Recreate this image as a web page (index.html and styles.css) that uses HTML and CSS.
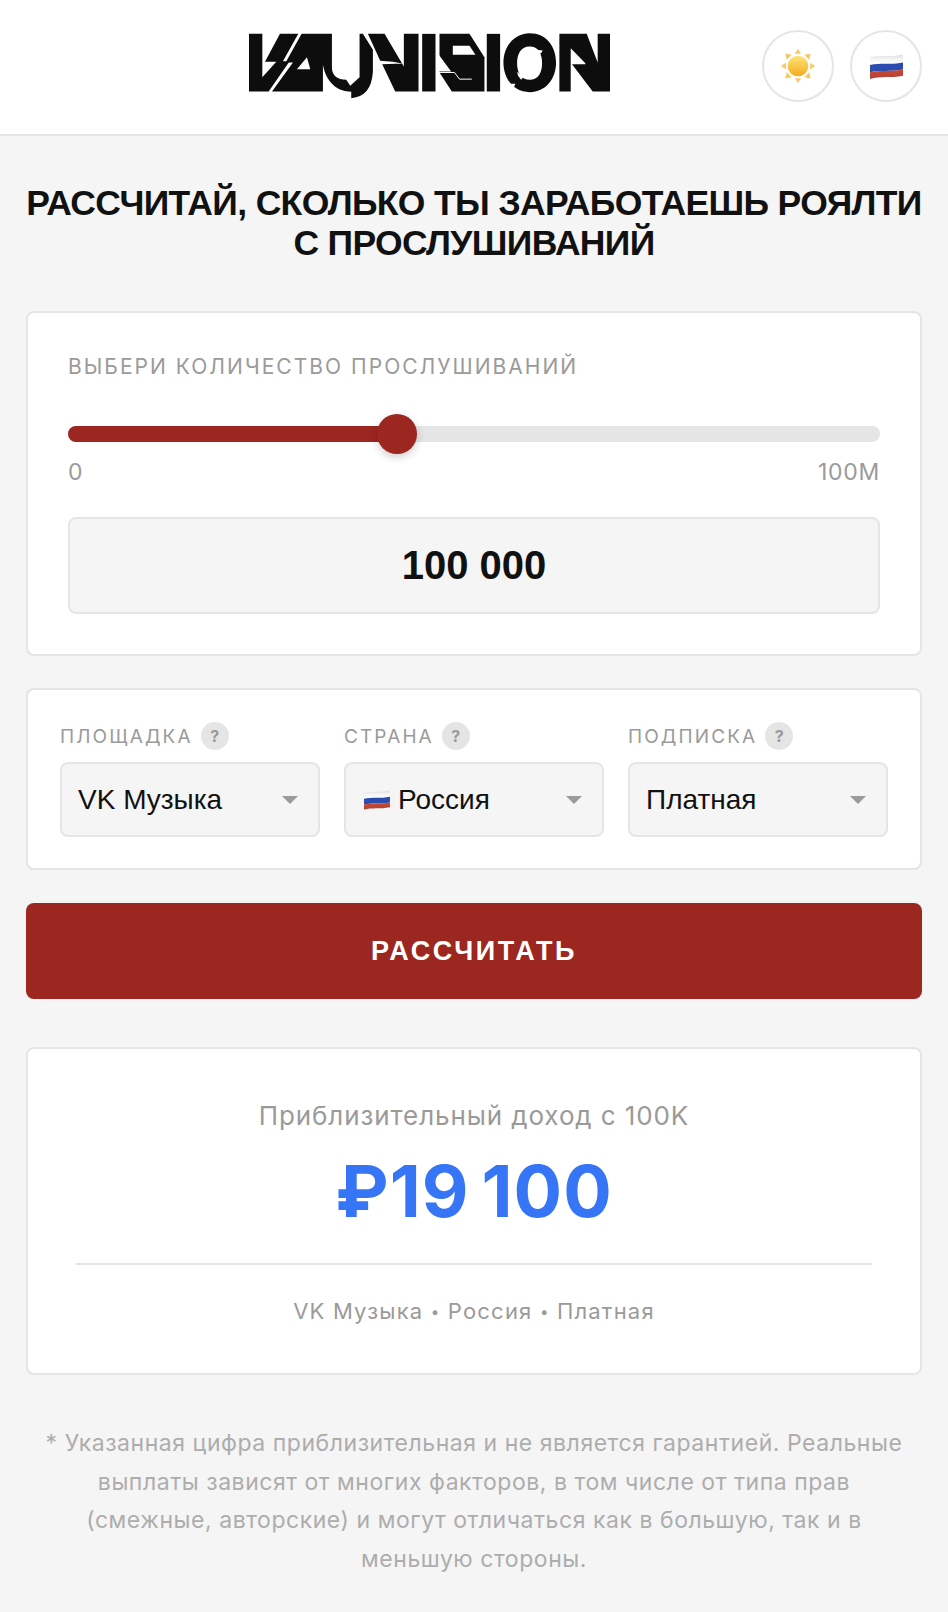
FILE: index.html
```html
<!doctype html>
<html lang="ru">
<head>
  <meta charset="utf-8">
  <title>Калькулятор роялти</title>
  <meta name="viewport" content="width=device-width,initial-scale=1">
  <link rel="stylesheet" href="styles.css">
</head>
<body>
  <header class="topbar">
    <svg class="logo" viewBox="85 100 1090 197" aria-label="VAUVISION">
      <!-- V -->
      <polygon points="88,102 128,102 128,232 170,186 136,186 181,102 236,102 190,184 210,184 147,275 88,275"/>
      <!-- A + U -->
      <path d="M246,102 H337 V205 Q339,238 380,240 L392,258 L420,232 V102 H430 L460,150 V215 Q456,290 395,295 V276 C355,276 320,250 310,195 V275 H157 L220,188 H198 Z"/>
      <polygon class="cut" points="262,172 272,208 232,208"/>
      <!-- N -->
      <polygon points="445,102 495,102 553,200 553,102 597,102 597,275 527,275 488,193 548,191 520,186 482,183"/>
      <!-- I -->
      <rect x="608" y="102" width="40" height="173"/>
      <!-- S -->
      <polygon points="660,102 750,102 795,172 795,275 697,275 660,218 660,102"/>
      <polygon class="cut" points="700,138 750,138 768,165 700,165"/>
      <polygon class="cut" points="658,165 695,215 658,215"/>
      <polyline class="cut-line" points="658,218 705,218 720,238 757,238"/>
      <!-- I -->
      <rect x="802" y="102" width="40" height="173"/>
      <!-- O -->
      <path fill-rule="evenodd" d="M931,100 C981,100 1010,140 1010,188 C1010,238 978,277 931,277 C884,277 852,238 852,188 C852,140 884,100 931,100 Z M931,140 C905,140 893,162 893,190 C893,218 905,240 931,240 C957,240 968,218 968,190 C968,162 957,140 931,140 Z"/>
      <polygon class="cut" points="975,100 1004,100 992,128"/>
      <polygon class="cut" points="952,150 970,152 965,160 955,160"/>
      <polygon class="cut" points="866,252 888,252 880,270 870,266"/>
      <polygon class="cut" points="893,215 912,232 905,240 896,228"/>
      <!-- N -->
      <path d="M1020,102 H1102 L1135,188 V102 H1172 V275 H1120 L1058,193 H1098 V190 L1054,145 V275 H1020 Z"/>
    </svg>
    <div class="top-actions">
      <button class="round-btn" aria-label="Тема">
        <svg class="sun" viewBox="0 0 40 40">
          <defs>
            <linearGradient id="sunFill" x1="0" y1="0" x2="0" y2="1">
              <stop offset="0" stop-color="#fde57a"/>
              <stop offset="1" stop-color="#f6aa1c"/>
            </linearGradient>
          </defs>
          <g fill="#f7c863">
            <polygon points="20,1 23.500,6.500 16.500,6.500"/>
            <polygon points="20,39 23.500,33.500 16.500,33.500"/>
            <polygon points="1,20 6.500,16.500 6.500,23.500"/>
            <polygon points="39,20 33.500,16.500 33.500,23.500"/>
            <polygon points="6,6 13,7.500 7.500,13"/>
            <polygon points="34,6 27,7.500 32.500,13"/>
            <polygon points="6,34 13,32.500 7.500,27"/>
            <polygon points="34,34 27,32.500 32.500,27"/>
          </g>
          <circle cx="20" cy="20" r="11.500" fill="url(#sunFill)"/>
        </svg>
      </button>
      <button class="round-btn" aria-label="Язык">
        <svg class="flag flag-lg" viewBox="0 0 32 24"><use href="#ruFlag"/></svg>
      </button>
    </div>
  </header>

  <svg class="defs">
    <defs>
      <linearGradient id="flagWhite" x1="0" y1="0" x2="0" y2="1">
        <stop offset="0" stop-color="#dcdcdc"/>
        <stop offset=".5" stop-color="#f6f6f6"/>
        <stop offset="1" stop-color="#ffffff"/>
      </linearGradient>
      <linearGradient id="flagRed" x1="0" y1="0" x2="0" y2="1">
        <stop offset="0" stop-color="#d2452f"/>
        <stop offset="1" stop-color="#a8453a"/>
      </linearGradient>
      <symbol id="ruFlag" viewBox="0 0 32 24">
        <path fill="url(#flagWhite)" d="M0,3 C10,.5 20,3.500 32,0 V8 C20,10.500 10,8 0,10.500 Z"/>
        <path fill="#2a4cb0" d="M0,10.500 C10,8 20,10.500 32,8 V15 C20,17.500 10,15 0,17.500 Z"/>
        <path fill="url(#flagRed)" d="M0,17.500 C10,15 20,17.500 32,15 V21 C20,23.500 10,21 0,24 Z"/>
      </symbol>
    </defs>
  </svg>

  <main class="page">
    <h1 class="page-title">Рассчитай, сколько ты заработаешь роялти<br>с прослушиваний</h1>

    <section class="card streams-card">
      <div class="field-label">Выбери количество прослушиваний</div>
      <div class="slider">
        <div class="slider-fill" style="width:40.5%"></div>
        <div class="slider-thumb" style="left:40.5%"></div>
      </div>
      <div class="slider-scale"><span>0</span><span>100M</span></div>
      <div class="streams-value">100 000</div>
    </section>

    <section class="card options-card">
      <div class="option">
        <div class="option-label">Площадка <span class="hint">?</span></div>
        <div class="select"><span class="select-value">VK Музыка</span></div>
      </div>
      <div class="option">
        <div class="option-label">Страна <span class="hint">?</span></div>
        <div class="select">
          <span class="select-value"><svg class="flag" viewBox="0 0 32 24"><use href="#ruFlag"/></svg>Россия</span>
        </div>
      </div>
      <div class="option">
        <div class="option-label">Подписка <span class="hint">?</span></div>
        <div class="select"><span class="select-value">Платная</span></div>
      </div>
    </section>

    <button class="calc-btn">Рассчитать</button>

    <section class="card result-card">
      <div class="result-title">Приблизительный доход с 100K</div>
      <div class="result-sum">₽19 100</div>
      <div class="result-meta">VK Музыка <span class="dot">•</span> Россия <span class="dot">•</span> Платная</div>
    </section>

    <p class="disclaimer">* Указанная цифра приблизительная и не является гарантией. Реальные выплаты зависят от многих факторов, в том числе от типа прав (смежные, авторские) и могут отличаться как в большую, так и в меньшую стороны.</p>
  </main>
</body>
</html>
```

FILE: styles.css
```css
:root {
  --bg: #f5f5f5;
  --card: #ffffff;
  --line: #e5e5e5;
  --text: #111111;
  --muted: #9a9a9a;
  --red: #9c2620;
  --blue: #3676f6;
}

* {
  box-sizing: border-box;
  margin: 0;
}
body {
  font-family: Inter, "Noto Sans", sans-serif;
  background: var(--bg);
  color: var(--text);
}

/* top bar */
.topbar {
  height: 136px;
  background: var(--card);
  border-bottom: 2px solid var(--line);
  display: flex;
  align-items: flex-start;
  padding: 30px 26px 0 248px;
}
.logo {
  width: 363px;
  height: 66px;
  margin-top: 3px;
  fill: #0d0d0d;
}
.logo .cut { fill: #fff; }
.logo .cut-line { fill: none; stroke: #fff; stroke-width: 3; }
.top-actions {
  margin-left: auto;
  display: flex;
  gap: 16px;
}
.round-btn {
  width: 72px;
  height: 72px;
  border-radius: 50%;
  border: 2px solid var(--line);
  background: var(--card);
  padding: 0;
  display: flex;
  align-items: center;
  justify-content: center;
}
.sun { width: 36px; height: 36px; }
.defs {
  position: absolute;
  width: 0;
  height: 0;
}
.flag {
  width: 26px;
  height: 20px;
  margin-left: 2px;
  margin-right: 8px;
}
.flag-lg { width: 33px; height: 25px; margin: 0; }

/* page */
.page { padding: 47px 26px 0; }
.page-title {
  font-family: "Liberation Sans", Arial, sans-serif;
  font-size: 35.5px;
  line-height: 40px;
  font-weight: 700;
  letter-spacing: -.65px;
  text-align: center;
  text-transform: uppercase;
}
.card {
  background: var(--card);
  border: 2px solid var(--line);
  border-radius: 8px;
}

/* streams */
.streams-card {
  margin-top: 48px;
  padding: 40px;
}
.field-label {
  font-size: 21px;
  line-height: 28px;
  letter-spacing: 2.03px;
  color: var(--muted);
  text-transform: uppercase;
}
.slider {
  position: relative;
  height: 16px;
  margin-top: 45px;
  border-radius: 8px;
  background: var(--line);
}
.slider-fill {
  height: 100%;
  border-radius: 8px;
  background: var(--red);
}
.slider-thumb {
  position: absolute;
  top: -12px;
  width: 40px;
  height: 40px;
  margin-left: -20px;
  border-radius: 50%;
  background: var(--red);
  box-shadow: 0 3px 8px rgba(0, 0, 0, .2);
}
.slider-scale {
  display: flex;
  justify-content: space-between;
  margin-top: 16px;
  font-size: 23px;
  line-height: 28px;
  letter-spacing: .7px;
  color: var(--muted);
}
.streams-value {
  margin-top: 31px;
  height: 97px;
  display: flex;
  align-items: center;
  justify-content: center;
  background: var(--bg);
  border: 2px solid var(--line);
  border-radius: 8px;
  font-family: "Liberation Sans", Arial, sans-serif;
  font-size: 40px;
  font-weight: 700;
}

/* options */
.options-card {
  margin-top: 32px;
  padding: 32px 32px 31px;
  display: grid;
  grid-template-columns: repeat(3, 1fr);
  gap: 24px;
}
.option-label {
  display: flex;
  align-items: center;
  gap: 8px;
  height: 28px;
  font-size: 19px;
  letter-spacing: 2.1px;
  color: var(--muted);
  text-transform: uppercase;
}
.hint {
  width: 28px;
  height: 28px;
  border-radius: 50%;
  background: var(--line);
  display: flex;
  align-items: center;
  justify-content: center;
  font-size: 16px;
  font-weight: 700;
  letter-spacing: 0;
}
.select {
  position: relative;
  margin-top: 12px;
  height: 75px;
  display: flex;
  align-items: center;
  padding: 0 16px;
  background: var(--bg);
  border: 2px solid var(--line);
  border-radius: 8px;
  font-family: "Liberation Sans", Arial, sans-serif;
  font-size: 28px;
}
.select::after {
  content: "";
  position: absolute;
  right: 20px;
  top: 32px;
  border-left: 8px solid transparent;
  border-right: 8px solid transparent;
  border-top: 8px solid var(--muted);
}
.select-value {
  display: flex;
  align-items: center;
}

.calc-btn {
  display: block;
  width: 100%;
  height: 96px;
  margin-top: 33px;
  background: var(--red);
  border: none;
  border-radius: 8px;
  color: #fff;
  font-family: "Liberation Sans", Arial, sans-serif;
  font-size: 27px;
  font-weight: 700;
  letter-spacing: 2.6px;
  text-transform: uppercase;
}

/* result */
.result-card {
  margin-top: 48px;
  padding: 50px 48px 45px;
  text-align: center;
}
.result-title {
  font-size: 26px;
  line-height: 34px;
  letter-spacing: .9px;
  color: var(--muted);
}
.result-sum {
  margin-top: 16px;
  padding-bottom: 30px;
  border-bottom: 2px solid var(--line);
  font-size: 72px;
  line-height: 84px;
  font-weight: 700;
  letter-spacing: 1px;
  word-spacing: -6px;
  color: var(--blue);
}
.result-meta {
  margin-top: 30px;
  font-size: 22px;
  line-height: 32px;
  letter-spacing: 1.2px;
  color: var(--muted);
}
.dot { font-size: 15px; vertical-align: 2px; }

.disclaimer {
  margin-top: 49px;
  padding: 0 16px;
  font-size: 23px;
  line-height: 38.6px;
  letter-spacing: .54px;
  text-align: center;
  color: #adadad;
}
```
